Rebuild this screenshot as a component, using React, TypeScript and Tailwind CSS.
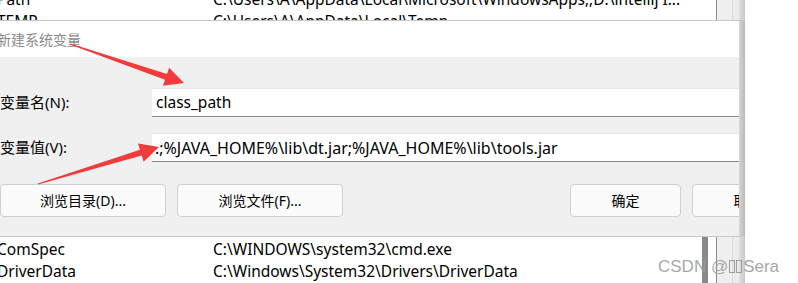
import React from 'react'

const latin = "font-['Noto_Sans','Noto_Sans_CJK_SC',sans-serif]"

type Pt = [number, number]

// build a tapered arrow polygon from tail to tip
function arrowPoints(tail: Pt, tip: Pt, headLen: number, headW: number, tailW: number, neckW: number) {
  const dx = tip[0] - tail[0]
  const dy = tip[1] - tail[1]
  const len = Math.hypot(dx, dy)
  const ux = dx / len
  const uy = dy / len
  const nx = -uy
  const ny = ux
  const bx = tip[0] - ux * headLen
  const by = tip[1] - uy * headLen
  const pts: Pt[] = [
    [tail[0] + (nx * tailW) / 2, tail[1] + (ny * tailW) / 2],
    [bx + (nx * neckW) / 2, by + (ny * neckW) / 2],
    [bx + (nx * headW) / 2, by + (ny * headW) / 2],
    tip,
    [bx - (nx * headW) / 2, by - (ny * headW) / 2],
    [bx - (nx * neckW) / 2, by - (ny * neckW) / 2],
    [tail[0] - (nx * tailW) / 2, tail[1] - (ny * tailW) / 2],
  ]
  return pts.map((p) => p.join(',')).join(' ')
}

function ListRow({ name, value }: { name: string; value: string }) {
  return (
    <div className="flex h-[22px] items-center whitespace-nowrap text-[15.5px] text-black">
      <div className="w-[216px] -ml-[3px] shrink-0">{name}</div>
      <div className="truncate">{value}</div>
    </div>
  )
}

function Scrollbar({ thumb }: { thumb?: boolean }) {
  return (
    <div className="flex h-full shrink-0">
      <div className="w-[702px]" />
      <div className={thumb ? 'w-[6px] bg-[#8a8a8a]' : 'w-[6px]'} />
      <div className="w-[8px]" />
      <div className="w-px bg-[#8c8c8c]" />
      <div className="w-[15px] bg-[#efefef]" />
      <div className="w-px bg-[#dcdcdc]" />
      <div className="w-[6px] bg-[#ececec]" />
      <div className="w-[6px] bg-gradient-to-r from-[#e0e0e0] to-[#c8c8c8]" />
    </div>
  )
}

function Button({ label, width }: { label: string; width: string }) {
  return (
    <button
      className={`${width} h-[33px] shrink-0 rounded-[4px] border border-[#d0d0d0] bg-[#fbfbfb] text-[14px] text-black`}
    >
      {label}
    </button>
  )
}

export default function App() {
  return (
    <div className={`relative w-[798px] h-[283px] overflow-hidden bg-white ${latin}`}>
      <div className="flex w-[745px] flex-col">
        {/* list behind the dialog, top part */}
        <div className="relative h-[20px] overflow-hidden">
          <div className="absolute inset-0">
            <Scrollbar />
          </div>
          <div className="relative -mt-[11px] w-[706px]">
            <ListRow name="Path" value="C:\Users\A\AppData\Local\Microsoft\WindowsApps;;D:\intellij I..." />
            <ListRow name="TEMP" value="C:\Users\A\AppData\Local\Temp" />
          </div>
        </div>

        {/* dialog */}
        <div className="flex h-[216px] border-t border-[#c6c6c6]">
          <div className="flex w-[739px] flex-col">
            <div className="flex h-[36px] items-center bg-white">
              <span className="-ml-[3px] text-[14px] text-[#8a8a8a]">新建系统变量</span>
            </div>
            <div className="flex flex-1 flex-col bg-[#f0f0f0] pt-[31px]">
              <div className="flex items-center">
                <div className="w-[152px] shrink-0 text-[15px] text-black">变量名(N):</div>
                <div className="flex h-[29px] flex-1 items-center border-t border-[#e6e6e6] border-b border-b-[#8a8a8a] bg-white pl-[4px] text-[15.5px] text-black">
                  class_path
                </div>
              </div>
              <div className="mt-[16px] flex items-center">
                <div className="w-[152px] shrink-0 text-[15px] text-black">变量值(V):</div>
                <div className="flex h-[29px] flex-1 items-center border-t border-[#e6e6e6] border-b border-b-[#8a8a8a] bg-white pl-[3px] text-[16px] text-black whitespace-nowrap">
                  .;%JAVA_HOME%\lib\dt.jar;%JAVA_HOME%\lib\tools.jar
                </div>
              </div>
              <div className="mt-[22px] flex items-center">
                <Button label="浏览目录(D)..." width="w-[166px]" />
                <div className="ml-[11px]">
                  <Button label="浏览文件(F)..." width="w-[166px]" />
                </div>
                <div className="ml-[227px]">
                  <Button label="确定" width="w-[111px]" />
                </div>
                <div className="ml-[11px] w-[48px] overflow-hidden">
                  <Button label="取消" width="w-[111px]" />
                </div>
              </div>
            </div>
          </div>
          <div className="w-[6px] bg-gradient-to-r from-[#d8d8d8] to-[#b8b8b8]" />
        </div>

        {/* list behind the dialog, bottom part */}
        <div className="relative h-[47px] border-t border-[#c9c9c9] overflow-hidden">
          <div className="absolute inset-0">
            <Scrollbar thumb />
          </div>
          <div className="relative pt-[2px] w-[700px]">
            <ListRow name="ComSpec" value="C:\WINDOWS\system32\cmd.exe" />
            <ListRow name="DriverData" value="C:\Windows\System32\Drivers\DriverData" />
          </div>
        </div>
      </div>

      {/* annotation arrows */}
      <svg className="absolute left-0 top-0" width="798" height="283">
        <polygon points={arrowPoints([70, 44], [184, 83], 19, 19, 1, 6)} fill="#f23b3b" />
        <polygon points={arrowPoints([38, 184], [159, 147], 19, 19, 1, 6)} fill="#f23b3b" />
      </svg>

      {/* watermark */}
      <div className="absolute left-[658px] top-[254px] flex items-center font-['Liberation_Sans',sans-serif] text-[17px] text-[#9c9c9c]/90">
        CSDN @
        <span className="mx-[1px] inline-block h-[13px] w-[6px] border border-[#9c9c9c]" />
        <span className="mr-[1px] inline-block h-[13px] w-[6px] border border-[#9c9c9c]" />
        Sera
      </div>
    </div>
  )
}
